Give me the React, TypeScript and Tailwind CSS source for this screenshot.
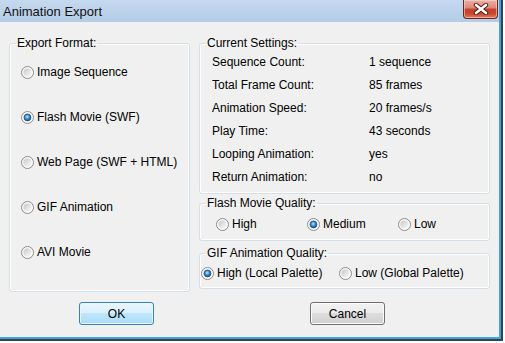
import React, { useId } from "react";

const font = { fontFamily: '"Liberation Sans", Arial, sans-serif' };

function Radio({ checked = false }: { checked?: boolean }) {
  const raw = useId();
  const id = raw.replace(/[^a-zA-Z0-9]/g, "");
  return (
    <svg width="13" height="13" viewBox="0 0 13 13" className="shrink-0">
      <defs>
        <linearGradient id={`${id}f`} x1="0" y1="0" x2="1" y2="1">
          <stop offset="0" stopColor="#c2c2c2" />
          <stop offset="0.6" stopColor="#e8e8e8" />
          <stop offset="1" stopColor="#ffffff" />
        </linearGradient>
        <radialGradient id={`${id}d`} cx="0.45" cy="0.4" r="0.65">
          <stop offset="0" stopColor="#c4ebff" />
          <stop offset="0.45" stopColor="#3d95d6" />
          <stop offset="1" stopColor="#0b3b6e" />
        </radialGradient>
      </defs>
      <circle cx="6.5" cy="6.5" r="6" fill="#f6f6f6" stroke="#8a8a8a" strokeWidth="1" />
      <circle cx="6.5" cy="6.5" r="4.6" fill={`url(#${id}f)`} stroke="#ffffff" strokeWidth="0.7" />
      {checked && (
        <circle cx="6.5" cy="6.5" r="3.4" fill={`url(#${id}d)`} stroke="#1b4a78" strokeWidth="0.7" />
      )}
    </svg>
  );
}

function RadioItem({ label, checked = false }: { label: string; checked?: boolean }) {
  return (
    <div className="flex h-[20px] items-center gap-[3px] whitespace-nowrap">
      <Radio checked={checked} />
      <span>{label}</span>
    </div>
  );
}

function Group({
  title,
  className,
  children,
}: {
  title: string;
  className: string;
  children: React.ReactNode;
}) {
  return (
    <fieldset
      className={`rounded-[3px] border border-[#d5dfe5] shadow-[inset_0_0_0_1px_#ffffff] ${className}`}
    >
      <legend className="ml-[6px] px-[1px] text-[12px] leading-[14px] text-black">{title}</legend>
      {children}
    </fieldset>
  );
}

const settings: [string, string][] = [
  ["Sequence Count:", "1 sequence"],
  ["Total Frame Count:", "85 frames"],
  ["Animation Speed:", "20 frames/s"],
  ["Play Time:", "43 seconds"],
  ["Looping Animation:", "yes"],
  ["Return Animation:", "no"],
];

export default function App() {
  return (
    <div className="h-[343px] w-[505px] bg-white text-[12px] leading-[14px] text-black" style={font}>
      <div className="h-[341px] w-[503px] border-b-2 border-r-2 border-[#35414d]">
        <div className="flex h-full w-full flex-col border-b-2 border-r-2 border-[#3ca6dc] bg-[#f0f0f0]">
          {/* Title bar */}
          <div className="flex h-[22px] shrink-0 items-start justify-between bg-[linear-gradient(#c5d9ef,#b4cce7)] pr-[1px]">
            <span className="pl-[3px] pt-[4px] text-[13px] leading-[15px] text-[#111]">Animation Export</span>
            <div className="flex h-[19px] w-[35px] items-center justify-center rounded-b-[4px] border border-t-0 border-[#6e241c] bg-[linear-gradient(#eab0a6_0%,#dc8577_45%,#c5412f_50%,#c8452f_75%,#e27a5c_100%)] shadow-[inset_0_0_0_1px_rgba(255,220,210,0.55)]">
              <svg width="16" height="12" viewBox="0 0 16 12">
                <path d="M3 2 L13 10 M13 2 L3 10" stroke="#4b1712" strokeWidth="4.4" strokeLinecap="round" />
                <path d="M3 2 L13 10 M13 2 L3 10" stroke="#ffffff" strokeWidth="2.6" strokeLinecap="round" />
              </svg>
            </div>
          </div>

          {/* Body */}
          <div className="flex gap-[9px] pl-[9px] pt-[14px]">
            <Group title="Export Format:" className="h-[256px] w-[181px]">
              <div className="flex flex-col gap-[25px] pl-[11px] pt-[12px]">
                <RadioItem label="Image Sequence" />
                <RadioItem label="Flash Movie (SWF)" checked />
                <RadioItem label="Web Page (SWF + HTML)" />
                <RadioItem label="GIF Animation" />
                <RadioItem label="AVI Movie" />
              </div>
            </Group>

            <div className="flex w-[291px] flex-col">
              <Group title="Current Settings:" className="h-[158px] w-full">
                <div className="grid auto-rows-[23px] grid-cols-[157px_1fr] items-center pl-[12px]">
                  {settings.map(([k, v]) => (
                    <React.Fragment key={k}>
                      <span>{k}</span>
                      <span>{v}</span>
                    </React.Fragment>
                  ))}
                </div>
              </Group>

              <Group title="Flash Movie Quality:" className="mt-[2px] h-[45px] w-full">
                <div className="grid grid-cols-[91px_91px_91px] pl-[16px] pt-[4px]">
                  <RadioItem label="High" />
                  <RadioItem label="Medium" checked />
                  <RadioItem label="Low" />
                </div>
              </Group>

              <Group title="GIF Animation Quality:" className="mt-[5px] h-[43px] w-full">
                <div className="grid grid-cols-[138px_1fr] pl-[1px] pt-[3px]">
                  <RadioItem label="High (Local Palette)" checked />
                  <RadioItem label="Low (Global Palette)" />
                </div>
              </Group>
            </div>
          </div>

          {/* Buttons */}
          <div className="mt-[10px] flex pl-[79px]">
            <button className="flex h-[23px] w-[75px] items-center justify-center rounded-[3px] border border-[#3c7fb1] bg-[linear-gradient(#eaf6fd_0%,#d9f0fc_50%,#bee6fd_50%,#a9dbf6_100%)] shadow-[inset_0_0_0_1px_#e4f6ff] text-[12px] text-black">
              OK
            </button>
            <button className="ml-[156px] flex h-[23px] w-[75px] items-center justify-center rounded-[3px] border border-[#707070] bg-[linear-gradient(#f2f2f2_0%,#ebebeb_50%,#dddddd_50%,#cfcfcf_100%)] shadow-[inset_0_0_0_1px_#fcfcfc] text-[12px] text-black">
              Cancel
            </button>
          </div>
        </div>
      </div>
    </div>
  );
}
